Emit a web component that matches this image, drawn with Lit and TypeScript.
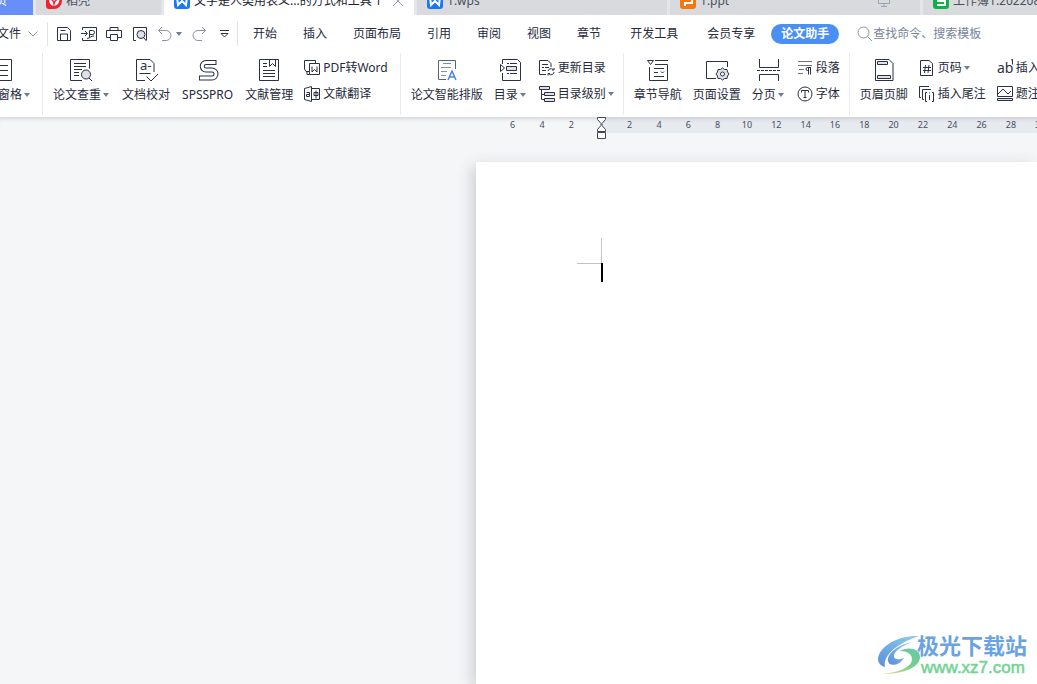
import { LitElement, html, svg, css, nothing } from "lit";
import type { TemplateResult } from "lit";
import { customElement } from "lit/decorators.js";
import { classMap } from "lit/directives/class-map.js";

type Art = ReturnType<typeof svg>;

const icon = (w: number, h: number, art: Art): TemplateResult => html`
  <svg class="ico" width=${w} height=${h} viewBox="0 0 ${w} ${h}" aria-hidden="true">${art}</svg>`;

const big: Record<string, Art> = {
  pane: svg`<path d="M2.500 1.500h18v21h-18zM6 7.500h11M6 12.500h11M6 17.500h11"/>`,
  check: svg`<path d="M12 22.500H.500v-21h19v9M4 5.500h12M4 8.500h12M4 11.500h8M4 14.500h5M4 17.500h5"/><circle class="tint" cx="16" cy="16.500" r="4.500"/><path d="M19 20l3 3"/>`,
  proof: svg`<path d="M11 22.500H2.500v-21H16l4 4V14M5.500 15.500h11M12.500 18.500l4.500 4.500 7-7"/><text x="6" y="12" font-size="13">a-</text>`,
  spss: svg`<path stroke-width="5" d="M20.500 4.500H10a3.700 3.700 0 0 0 0 7.500h6a4 4 0 0 1 0 8H3"/><path stroke="#fff" stroke-width="3" d="M19.500 4.500H10a3.700 3.700 0 0 0 0 7.500h6a4 4 0 0 1 0 8H4"/>`,
  refs: svg`<path d="M2.500 1.500h19v21h-19zM6 5.500h4M6 8.500h4M6 12.500h12M6 15.500h12M6 18.500h12M12.500 1.500v7l3-3 3 3v-7"/>`,
  layout: svg`<path stroke="#5d6270" d="M11 21.500H3.500v-19h17V11"/><path stroke="#5b8ff0" d="M8 5.500h8"/><path stroke="#8a8f9c" d="M6 9.500h10M6 13.500h6M6 17.500h5"/><path stroke="#4a86e8" stroke-width="1.500" d="M13 22l4-9 4 9M14.500 19h5"/>`,
  toc: svg`<path d="M3.500 6V1.500h15l3 3v18h-18V15M8 5.500h2M11 5.500h7M8 15.500h2M11 15.500h7M1.500 6.500v7l4-3.500z"/><path class="tint" d="M7.500 8.500h10v4h-10z"/>`,
  chapter: svg`<path d="M9 2.500h13M3.500 9v13.500h18v-16H9M8 10.500h10M8 14.500h4M8 18.500h10M15 13.500l1.500 1.500 1.500-1.500M1.500 2.500h6L4.500 6.500z"/>`,
  setup: svg`<path d="M11 20.500H1.500v-17h21V9"/><path class="tint" d="M15.500 11.500l2-1.500 2 1.500 2.500 0 .500 2.500 1.500 2-1.500 2-.500 2.500h-2.500l-2 1.500-2-1.500H13l-.500-2.500-1.500-2 1.500-2 .500-2.500z"/><circle fill="#fff" cx="17.500" cy="16" r="2"/>`,
  breaks: svg`<path d="M2.500 1v8.500h19V1M2.500 23v-6.500h19V23"/><path stroke-dasharray="3 1" d="M0 12.500h24"/>`,
  header: svg`<path d="M3.500 1.500H17l4 4v17H3.500z"/><path class="tint" d="M5.500 3.500h10v3h-10zM5.500 17.500h13v3h-13z"/>`,
};

const small: Record<string, Art> = {
  pdf: svg`<path d="M5 11.500H2L.500 9V.500h11V3M3 11v3.500h2"/><path d="M5.500 3.500h10v11h-10zM8 6.500v5.500l2.500-2.500 2.500 2.500V6.500"/>`,
  translate: svg`<path d="M.500 2.500L7.500.500v15l-7-2zM8 2.500h7.500v11H8M10 6.500h4v3h-4zM12 4.500v8"/><path d="M2.500 6.500h3v4h-3v-2h3"/>`,
  refresh: svg`<path d="M7 14.500H.500V.500H9l3 3V7M3 4.500h6M3 7.500h2M6 7.500h4M3 10.500h4M9 11a3 3 0 0 1 5-1.500M15 8v2h-2M15 12a3 3 0 0 1-5 2M9 15.500v-2h2"/>`,
  levels: svg`<path d="M2.500 4v9.500H5M2.500 8.500H5"/><path class="tint" d="M.500.500h10v3h-10zM5.500 6.500h10v3h-10zM5.500 12.500h10v3h-10z"/>`,
  para: svg`<path stroke="#6d7280" d="M1 1.500h14M1 5.500h14M2 9.500h5M1 13.500h5"/><path d="M14 7.500h-3.500a1.500 1.500 0 0 0 0 3H11M11.500 7.500v7M13.500 7.500v7"/>`,
  font: svg`<circle cx="8" cy="8" r="7"/><path d="M4.500 6.500v-2h7v2M8 4.500v7M6.500 11.500h3"/>`,
  pageno: svg`<path d="M1.500.500H10l3.500 3v12h-12zM4 7.500h8M4 10.500h8M6.500 5l-1 8M10 5l-1 8"/>`,
  endnote: svg`<path d="M2 11.500H.500V.500H10M5 13.500H3.500v-10H12M8 6.500H6.500v9H8M13 6.500h1.500v9H13M10.500 9v5M10.500 6.500v1"/>`,
  footnote: svg`<text x="0" y="13" font-size="14">ab</text><path d="M14 0l1.500-.500v5"/>`,
  caption: svg`<path d="M.500.500h15v10H.500zM1 8l5-5 5 5 3-3"/><path class="tint" d="M.500 12.500h15v2H.500z"/>`,
};

const quick: Record<string, [string, Art]> = {
  save: ["保存", svg`<path d="M1.500 14.500v-13h10l3 3v10zM4.500 14v-6h7v6M4.500 4.500h5"/>`],
  export: ["输出为PDF", svg`<path d="M1.500 4V1.500h14v13h-14V12M0 7.500h6M4 5l2.500 2.500L4 10M8.500 12V4.500h3a2 2 0 0 1 0 4h-3M6 12.500c3 0 4-3 7-2.500"/>`],
  print: ["打印", svg`<path d="M4 4.500v-3h8v3M4 11.500H.500v-7h15v7H12M4.500 8.500h7v6h-7z"/>`],
  preview: ["打印预览", svg`<path d="M5 14.500H2.500v-13h13V14"/><circle class="tint" cx="10" cy="8.500" r="4"/><path d="M12.500 11.500l3 3.500"/>`],
};

const caret = html`<svg class="caret" width="6" height="4" viewBox="0 0 6 4" aria-hidden="true"><path d="M0 0h6L3 4z" /></svg>`;

type Item = { art: string; label: string; drop?: boolean; latin?: boolean };
type Cell = Item | Item[];

const groups: Cell[][] = [
  [{ art: "pane", label: "导航窗格", drop: true }],
  [
    { art: "check", label: "论文查重", drop: true },
    { art: "proof", label: "文档校对" },
    { art: "spss", label: "SPSSPRO", latin: true },
    { art: "refs", label: "文献管理" },
    [{ art: "pdf", label: "PDF转Word", latin: true }, { art: "translate", label: "文献翻译" }],
  ],
  [
    { art: "layout", label: "论文智能排版" },
    { art: "toc", label: "目录", drop: true },
    [{ art: "refresh", label: "更新目录" }, { art: "levels", label: "目录级别", drop: true }],
  ],
  [
    { art: "chapter", label: "章节导航" },
    { art: "setup", label: "页面设置" },
    { art: "breaks", label: "分页", drop: true },
    [{ art: "para", label: "段落" }, { art: "font", label: "字体" }],
  ],
  [
    { art: "header", label: "页眉页脚" },
    [{ art: "pageno", label: "页码", drop: true }, { art: "endnote", label: "插入尾注" }],
    [{ art: "footnote", label: "插入脚注" }, { art: "caption", label: "题注" }],
  ],
];

const menus = ["开始", "插入", "页面布局", "引用", "审阅", "视图", "章节", "开发工具", "会员专享", "论文助手"];

const marks: Record<string, Art> = {
  docer: svg`<path fill="#f5222d" d="M8 0h5a3 3 0 0 1 3 3v5a8 8 0 0 1-8 8H3a3 3 0 0 1-3-3V8a8 8 0 0 1 8-8z"/><path fill="#fff" d="M3 6c3 1 4.500 3 4.500 7C4.500 12 3 10 3 6zM13.500 6c0 4-2 6-5 7 0-4 2-6 5-7zM8 2l2.500 3L8 8.500 6 5z"/>`,
  writer: svg`<rect width="16" height="16" rx="3" fill="#1677ff"/><path stroke="#fff" stroke-width="2" fill="none" d="M3 4l1 8 4-4 4 4 1-8"/>`,
  slides: svg`<rect width="16" height="16" rx="3" fill="#f5780f"/><path stroke="#fff" stroke-width="2" fill="none" d="M4 4h8v6H5v3"/>`,
  sheet: svg`<rect width="16" height="16" rx="3" fill="#12b04c"/><path stroke="#fff" stroke-width="2" fill="none" d="M12 4H5v4h7v4H4"/>`,
};

type Tab = { kind: string; label: string; mark?: string; extra?: "close" | "screen" };
const tabs: Tab[] = [
  { kind: "home", label: "首页" },
  { kind: "docer", label: "稻壳", mark: "docer" },
  { kind: "active", label: "文字是人类用表义...的方式和工具 1", mark: "writer", extra: "close" },
  { kind: "file", label: "1.wps", mark: "writer" },
  { kind: "file", label: "1.ppt", mark: "slides", extra: "screen" },
  { kind: "file", label: "工作簿1.20220805", mark: "sheet" },
];

const buttonReset = css`
  button {
    margin: 0;
    padding: 0;
    border: 0;
    background: none;
    color: inherit;
    font: inherit;
    white-space: nowrap;
    flex: none;
  }
  svg {
    display: block;
    flex: none;
  }
  .ico {
    fill: none;
    stroke: #2b3044;
    overflow: visible;
  }
  .ico text {
    fill: #2b3044;
    stroke: none;
    font-family: "Noto Sans", sans-serif;
  }
  .tint {
    fill: #dfe1e6;
  }
  .caret {
    fill: #6f7c91;
  }
`;

@customElement("tab-strip")
export class TabStrip extends LitElement {
  static styles = [
    buttonReset,
    css`
      :host {
        display: flex;
        align-items: flex-end;
        gap: 3px;
        height: 15px;
        overflow: hidden;
        background: #e5e6ea;
      }
      .tab {
        display: flex;
        align-items: center;
        gap: 4px;
        flex: 0 0 250px;
        height: 28px;
        padding: 0 10px;
        box-sizing: border-box;
        background: #d9dade;
        color: #4a4f5e;
        text-align: left;
      }
      .home {
        flex-basis: 50px;
        margin-left: -17px;
        padding: 0 26px 0 0;
        background: #668ffa;
        color: #fff;
      }
      .docer {
        flex-basis: 125px;
      }
      .active {
        background: #fff;
        color: #20232e;
      }
      .name {
        flex: 1;
      }
      .extra {
        fill: none;
        stroke: #9aa3b5;
      }
      .screen {
        margin-right: 20px;
      }
    `,
  ];

  render() {
    return tabs.map(
      (t) => html`<button class="tab ${t.kind}">
        ${t.mark ? html`<svg width="16" height="16" viewBox="0 0 16 16">${marks[t.mark]}</svg>` : nothing}
        <span class="name">${t.label}</span>
        ${t.extra === "close"
          ? html`<svg class="extra" width="12" height="12" viewBox="0 0 12 12"><path d="M1 1l10 10M11 1L1 11" /></svg>`
          : nothing}
        ${t.extra === "screen"
          ? html`<svg class="extra screen" width="12" height="12" viewBox="0 0 12 12"><path d="M.5 1.500h11v7H.500zM6 8.500v3M3 11.500h6" /></svg>`
          : nothing}
      </button>`
    );
  }
}

@customElement("menu-row")
export class MenuRow extends LitElement {
  static styles = [
    buttonReset,
    css`
      :host {
        display: flex;
        align-items: center;
        height: 37px;
        overflow: hidden;
        background: #fff;
      }
      .file {
        display: flex;
        align-items: center;
        gap: 7px;
        margin-left: -3px;
        padding-right: 9px;
      }
      .thin {
        fill: none;
        stroke: #8d93a1;
      }
      .tools {
        display: flex;
        align-items: center;
        gap: 9px;
        padding: 0 5px 0 8px;
        height: 24px;
        border: solid #e2e3e7;
        border-width: 0 1px;
      }
      .undo {
        display: flex;
        align-items: center;
        gap: 4px;
      }
      .menus {
        display: flex;
        align-items: center;
        gap: 26px;
        padding: 0 18px 0 15px;
      }
      .menus button,
      .file,
      .search input {
        padding-top: 1px;
      }
      .wide {
        margin-left: 3px;
      }
      .menus .pill {
        height: 20px;
        margin-left: -10px;
        padding: 0 10px;
        border-radius: 10px;
        background: #4a90f2;
        color: #fff;
        font-weight: 700;
      }
      .search {
        display: flex;
        align-items: center;
        flex: 1;
      }
      .search input {
        flex: 1;
        min-width: 0;
        margin: 0;
        padding: 1px 0 0;
        border: 0;
        outline: 0;
        background: none;
        font: inherit;
      }
      .search input::placeholder {
        color: #77839a;
        opacity: 1;
      }
    `,
  ];

  render() {
    return html`
      <button class="file">
        文件<svg class="thin" width="10" height="6" viewBox="0 0 10 6"><path d="M.5.5L5 5l4.500-4.500" /></svg>
      </button>
      <div class="tools">
        ${Object.values(quick).map(([name, art]) => html`<button aria-label=${name}>${icon(16, 16, art)}</button>`)}
        <button class="undo" aria-label="撤销">
          <svg class="thin" width="16" height="16" viewBox="0 0 16 16"><path d="M6 1L2.500 4.500 6 8M2.500 4.500H10a5 5 0 0 1 0 10H6" /></svg>${caret}
        </button>
        <button aria-label="恢复">
          <svg class="thin" width="16" height="16" viewBox="0 0 16 16"><path d="M11 1l3.500 3.500L11 8M14.500 4.500H7a5 5 0 0 0 0 10h4" /></svg>
        </button>
        <button aria-label="更多">
          <svg class="ico" width="16" height="10" viewBox="0 0 16 10"><path d="M4 1.500h9M5 4.500h7L8.500 8z" /></svg>
        </button>
      </div>
      <nav class="menus">
        ${menus.map(
          (m, i) => html`<button class=${classMap({ wide: i === 7 || i === 8, pill: i === 9 })}>${m}</button>`
        )}
      </nav>
      <label class="search">
        <svg class="thin" width="16" height="16" viewBox="0 0 16 16"><circle cx="6.500" cy="6.500" r="5.500" /><path d="M10.500 10.500l4.500 4.500" /></svg>
        <input type="search" aria-label="搜索" placeholder="查找命令、搜索模板" />
      </label>
    `;
  }
}

@customElement("tool-ribbon")
export class ToolRibbon extends LitElement {
  static styles = [
    buttonReset,
    css`
      :host {
        display: flex;
        overflow: hidden;
        padding: 1px 0 2px;
        background: #fff;
      }
      .group {
        display: flex;
        flex: none;
        align-items: flex-start;
        gap: 11px;
        padding: 5px 9px 12px 10px;
        border-right: 1px solid #e9eaed;
      }
      .group:first-child {
        padding: 5px 10px 12px 0;
        margin-left: -26px;
      }
      .group:last-child {
        border: 0;
      }
      .big {
        display: flex;
        flex-direction: column;
        align-items: center;
        gap: 5px;
        line-height: 16px;
      }
      .big.latin {
        padding: 0 1px;
      }
      .row.latin {
        padding-right: 3px;
      }
      .label {
        display: flex;
        align-items: center;
        gap: 2px;
      }
      .big .caret {
        margin-right: 2px;
      }
      .stack {
        display: flex;
        flex-direction: column;
        align-items: flex-start;
        gap: 8px;
        padding-top: 1px;
      }
      .row {
        display: flex;
        align-items: center;
        gap: 3px;
        height: 18px;
      }
    `,
  ];

  private item(i: Item, stacked = false) {
    return html`<button class=${classMap({ row: stacked, big: !stacked, latin: !!i.latin })}>
      ${stacked ? icon(16, 16, small[i.art]) : icon(24, 24, big[i.art])}
      <span class="label">${i.label}${i.drop ? caret : nothing}</span>
    </button>`;
  }

  render() {
    return groups.map(
      (g) => html`<div class="group">
        ${g.map((c) => (Array.isArray(c) ? html`<div class="stack">${c.map((i) => this.item(i, true))}</div>` : this.item(c)))}
      </div>`
    );
  }
}

@customElement("document-area")
export class DocumentArea extends LitElement {
  static styles = css`
    :host {
      position: relative;
      display: flex;
      flex-direction: column;
      flex: 1;
      overflow: hidden;
      background: #f5f6f8;
    }
    .ruler {
      position: relative;
      display: flex;
      height: 16px;
      margin-bottom: 29px;
      color: #474e63;
      font-size: 9px;
      line-height: 16px;
      text-align: center;
      box-shadow: inset 0 5px 4px -3px #d3d5da;
    }
    .before {
      display: flex;
      justify-content: flex-end;
      flex: 0 0 601px;
      box-sizing: border-box;
      padding-right: 15px;
    }
    .after {
      flex: 1;
      min-width: 0;
      overflow: hidden;
      padding-left: 14px;
      background: #e7eaef;
      box-shadow: inset 0 5px 4px -3px #ccd0d7;
    }
    .ticks {
      display: flex;
      flex: none;
      width: 88px;
    }
    .after .ticks {
      width: 440px;
    }
    .tick {
      flex: 1;
    }
    .indent {
      position: absolute;
      left: 597px;
      top: 0;
      fill: #fff;
      stroke: #3f4660;
    }
    .page {
      display: flex;
      flex: 1;
      align-items: flex-start;
      margin-left: 476px;
      padding: 76px 0 0 101px;
      background: #fff;
      box-shadow: -4px 4px 14px rgba(60, 65, 75, 0.22);
    }
    .corner {
      width: 24px;
      height: 25px;
      border: solid #c4c4c4;
      border-width: 0 1px 1px 0;
    }
    .cursor {
      width: 2px;
      height: 19px;
      margin: 25px 0 0 -1px;
      background: #000;
    }
    .stamp {
      position: absolute;
      right: 10px;
      bottom: 6px;
      display: flex;
      align-items: center;
      white-space: nowrap;
    }
    .site {
      margin-left: -8px;
    }
    .title {
      color: #6ba3e0;
      font-size: 22px;
      font-weight: 700;
      line-height: 26px;
    }
    .url {
      padding-left: 4px;
      color: #72d392;
      font-family: "Liberation Sans", Arial, sans-serif;
      font-size: 17px;
      -webkit-text-stroke: 0.5px #72d392;
      line-height: 20px;
    }
  `;

  render() {
    const right = Array.from({ length: 15 }, (_, i) => (i + 1) * 2);
    return html`
      <div class="ruler">
        <div class="before">
          <div class="ticks">${[6, 4, 2].map((n) => html`<span class="tick">${n}</span>`)}</div>
        </div>
        <div class="after">
          <div class="ticks">${right.map((n) => html`<span class="tick">${n}</span>`)}</div>
        </div>
        <svg class="indent" width="9" height="22" viewBox="0 0 9 22" aria-hidden="true">
          <path d="M.5.500h8v2L5 6.500v2l3.500 4v2h-8v-2L4 8.500v-2L.500 2.500zM.500 15.500h8v6h-8z" />
        </svg>
      </div>
      <main class="page">
        <div class="corner"></div>
        <div class="cursor"></div>
      </main>
      <div class="stamp">
        <svg width="48" height="42" viewBox="0 0 48 42" aria-hidden="true">
          <defs>
            <linearGradient id="blue" x1="0" y1="1" x2="1" y2="0"><stop offset="0" stop-color="#5b8edb" /><stop offset="1" stop-color="#8fd0f0" /></linearGradient>
            <linearGradient id="green" x1="0" y1="1" x2="1" y2="0"><stop offset="0" stop-color="#e6e08a" /><stop offset="0.500" stop-color="#74d08c" /><stop offset="1" stop-color="#68c8a8" /></linearGradient>
          </defs>
          <path fill="url(#blue)" d="M42 2C22 1 2 12 1 25c0 4 3 7 7 8-2-10 8-22 34-31z" />
          <path fill="url(#blue)" d="M35 8C20 11 10 20 11 27c1 6 11 5 16-3-5 2-10 2-10-2 0-5 8-10 18-14z" />
          <path fill="url(#green)" d="M23 17c9-5 20-2 20 6 0 10-16 17-37 17 17-2 29-7 29-15 0-5-5-8-12-8z" />
        </svg>
        <div class="site">
          <div class="title">极光下载站</div>
          <div class="url">www.xz7.com</div>
        </div>
      </div>
    `;
  }
}

@customElement("app-root")
export class AppRoot extends LitElement {
  static styles = css`
    :host {
      display: flex;
      flex-direction: column;
      height: 100vh;
      overflow: hidden;
      color: #262a3b;
      font: 12px/16px "Noto Sans", "Noto Sans CJK SC", sans-serif;
    }
  `;

  render() {
    return html`
      <tab-strip></tab-strip>
      <menu-row></menu-row>
      <tool-ribbon></tool-ribbon>
      <document-area></document-area>
    `;
  }
}
